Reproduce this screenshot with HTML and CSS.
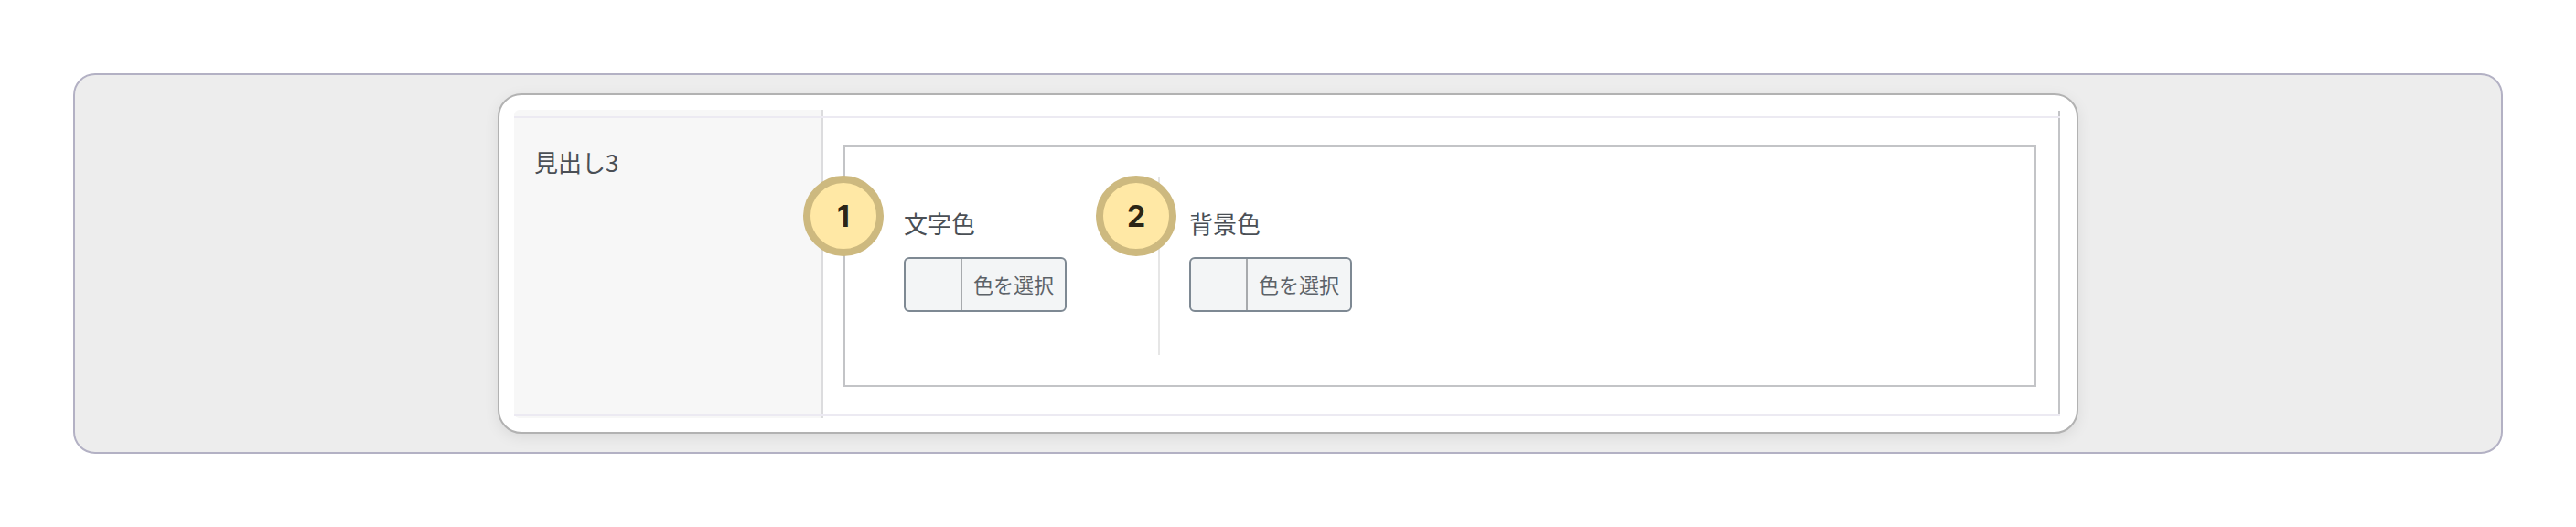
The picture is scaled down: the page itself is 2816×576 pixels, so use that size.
FILE: index.html
```html
<!DOCTYPE html>
<html lang="ja">
<head>
<meta charset="utf-8">
<title>見出し3</title>
<link rel="stylesheet" href="styles.css">
</head>
<body>
<div class="stage">
  <div class="window">
    <div class="table">
      <div class="th">見出し3</div>
      <div class="td">
        <div class="panel">
          <div class="field field-text">
            <span class="badge badge-one">1</span>
            <div class="label">文字色</div>
            <button class="picker" type="button"><span class="swatch"></span><span class="picker-text">色を選択</span></button>
          </div>
          <div class="field field-bg">
            <span class="badge badge-two">2</span>
            <div class="label">背景色</div>
            <button class="picker" type="button"><span class="swatch"></span><span class="picker-text">色を選択</span></button>
          </div>
        </div>
      </div>
    </div>
  </div>
</div>
</body>
</html>
```
FILE: styles.css
```css
* { box-sizing: border-box; }
html, body { margin: 0; padding: 0; background: #fff; }
body {
  width: 2816px;
  height: 576px;
  padding: 80px;
  font-family: "Noto Sans CJK JP", "Noto Sans", sans-serif;
}
.stage {
  height: 416px;
  padding: 20px 0 0;
  display: flex;
  justify-content: center;
  background: #ededed;
  border: 2px solid #b3b1c4;
  border-radius: 24px;
}
.window {
  width: 1728px;
  height: 372px;
  padding: 16px 18px 15px 16px;
  background: #fff;
  border: 2px solid #b2b2b2;
  border-radius: 26px;
  box-shadow: 0 4px 16px rgba(0, 0, 0, 0.08);
}
.table {
  position: relative;
  display: flex;
  height: 337px;
}
.table::before {
  content: "";
  position: absolute;
  z-index: 1;
  top: 7px;
  left: 0;
  right: 0;
  bottom: 2px;
  border-top: 2px solid #eceaf2;
  border-bottom: 2px solid #eceaf2;
  pointer-events: none;
}
.th {
  width: 338px;
  padding: 34px 0 0 22px;
  background: #f7f7f7;
  border-right: 2px solid #dcdcde;
  border-radius: 6px 0 0 6px;
  font-size: 26px;
  line-height: 46px;
  color: #4a4f55;
}
.td {
  flex: 1;
  margin: 1px 0 2px;
  padding: 38px 24px 32px 22px;
  border-right: 2px solid #c3c4c7;
}
.panel {
  display: flex;
  height: 264px;
  padding: 32px 0 0 64px;
  background: #fff;
  border: 2px solid #c3c4c7;
}
.field {
  position: relative;
  height: 195px;
}
.field-text {
  width: 280px;
  border-right: 2px solid #e6e6e6;
}
.field-bg {
  padding-left: 32px;
}
.label {
  margin: 29px 0 15px;
  font-size: 26px;
  line-height: 44px;
  color: #4a4f55;
}
.picker {
  display: flex;
  align-items: stretch;
  width: 178px;
  height: 60px;
  padding: 0;
  background: #f3f5f6;
  border: 2px solid #7e8993;
  border-radius: 6px;
  font-family: inherit;
  color: #5c6268;
}
.swatch {
  width: 62px;
  border-right: 2px solid #a7aaad;
}
.picker-text {
  padding-left: 12px;
  font-size: 22px;
  line-height: 55px;
}
.badge {
  position: absolute;
  top: -1px;
  width: 88px;
  height: 88px;
  display: flex;
  align-items: center;
  justify-content: center;
  background: #ffe8a5;
  border: 8px solid #cdb97f;
  border-radius: 50%;
  font-family: Inter, "Noto Sans", sans-serif;
  font-size: 32px;
  font-weight: 700;
  color: #2b2516;
}
.badge-one { left: -110px; }
.badge-two { left: -70px; }
```
